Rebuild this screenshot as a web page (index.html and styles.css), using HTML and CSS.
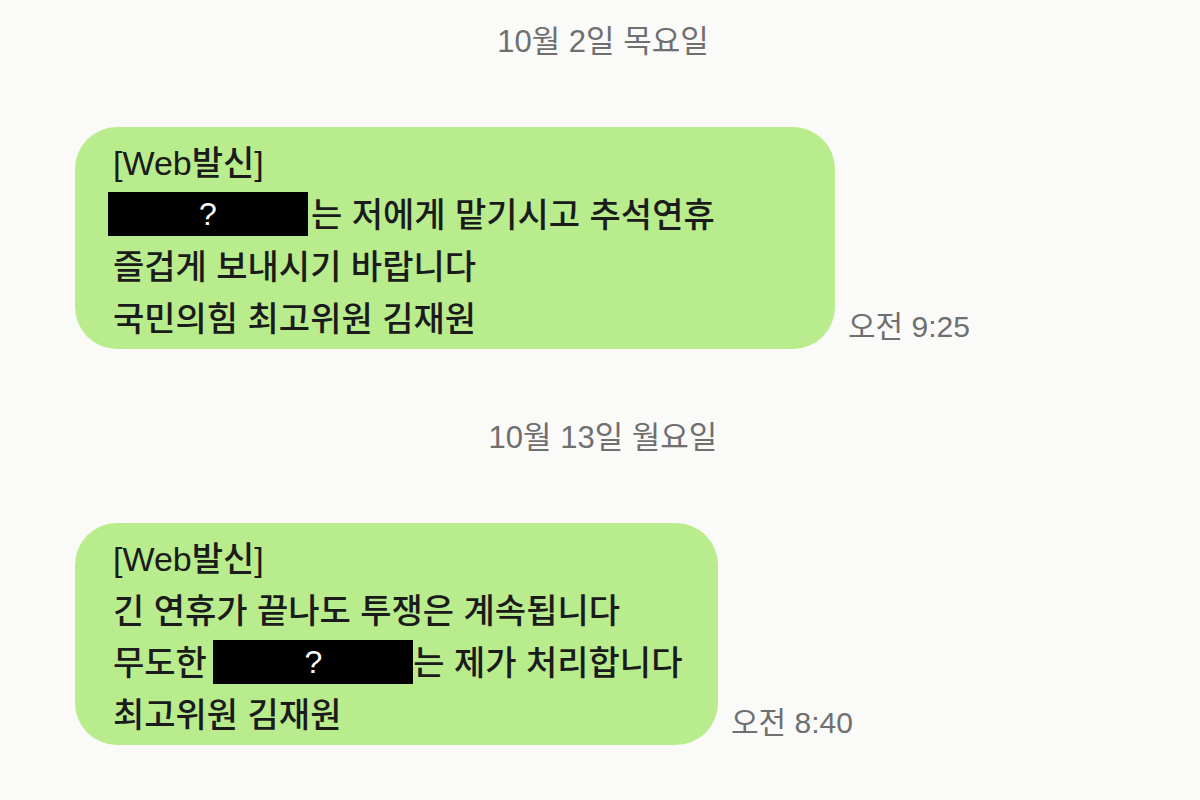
FILE: index.html
```html
<!DOCTYPE html>
<html lang="ko">
<head>
    <meta charset="UTF-8">
    <meta name="viewport" content="width=device-width, initial-scale=1.0">
    <title>메시지</title>
    <link rel="stylesheet" href="styles.css">
</head>
<body>
    <div class="chat">
        <div class="date">10월 2일 목요일</div>

        <div class="message">
            <div class="bubble bubble-wide">
                <p>[Web발신]</p>
                <p><span class="redact">?</span>는 저에게 맡기시고 추석연휴</p>
                <p>즐겁게 보내시기 바랍니다</p>
                <p>국민의힘 최고위원 김재원</p>
            </div>
            <span class="time">오전 9:25</span>
        </div>

        <div class="date">10월 13일 월요일</div>

        <div class="message">
            <div class="bubble bubble-narrow">
                <p>[Web발신]</p>
                <p>긴 연휴가 끝나도 투쟁은 계속됩니다</p>
                <p>무도한 <span class="redact inline">?</span>는 제가 처리합니다</p>
                <p>최고위원 김재원</p>
            </div>
            <span class="time">오전 8:40</span>
        </div>
    </div>
</body>
</html>
```

FILE: styles.css
```css
* {
    margin: 0;
    padding: 0;
    box-sizing: border-box;
}

body {
    font-family: 'Liberation Sans', 'Noto Sans CJK KR', sans-serif;
    background-color: #fafaf8;
    color: #1b1b1b;
    width: 1200px;
    height: 800px;
    overflow: hidden;
}

.chat {
    padding: 22px 0 0 75px;
}

/* day separators */
.date {
    height: 40px;
    line-height: 40px;
    font-size: 31px;
    color: #6f6f6f;
    text-align: center;
    padding-right: 69px;
    margin-bottom: 65px;
}

.message {
    display: flex;
    align-items: flex-end;
    margin-bottom: 69px;
}

.bubble {
    background-color: #b9ec8d;
    border-radius: 42px;
    padding: 10px 30px 4px 38px;
    font-size: 34px;
    line-height: 52px;
    font-weight: 500;
}

.bubble-wide {
    width: 760px;
}

.bubble-narrow {
    width: 643px;
}

.bubble p {
    height: 52px;
    white-space: nowrap;
}

/* blacked-out name */
.redact {
    display: inline-block;
    width: 200px;
    height: 44px;
    line-height: 44px;
    background-color: #000;
    color: #fff;
    font-size: 32px;
    font-weight: 300;
    text-align: center;
    vertical-align: top;
    margin: 3px 3px 0 -5px;
}

.redact.inline {
    margin-left: -3px;
    margin-right: 0;
}

.time {
    font-size: 30px;
    color: #6f6f6f;
    margin-left: 13px;
    padding-bottom: 3px;
    white-space: nowrap;
}
```
